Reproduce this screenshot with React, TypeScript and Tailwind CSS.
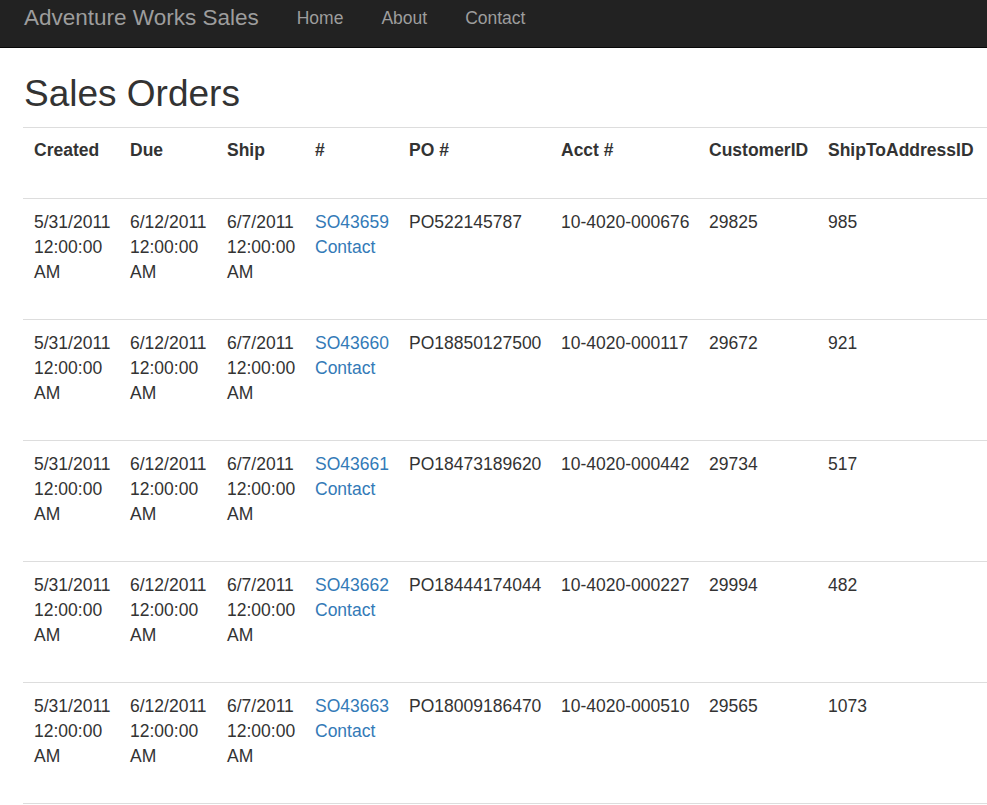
const NAV = ['Home', 'About', 'Contact'];

const COLS = [
  { label: 'Created', w: 'w-[96px]' },
  { label: 'Due', w: 'w-[97px]' },
  { label: 'Ship', w: 'w-[88px]' },
  { label: '#', w: 'w-[94px]' },
  { label: 'PO #', w: 'w-[152px]' },
  { label: 'Acct #', w: 'w-[148px]' },
  { label: 'CustomerID', w: 'w-[119px]' },
  { label: 'ShipToAddressID', w: 'w-[170px]' },
];

const ORDERS = [
  { so: 'SO43659', po: 'PO522145787', acct: '10-4020-000676', cust: '29825', addr: '985' },
  { so: 'SO43660', po: 'PO18850127500', acct: '10-4020-000117', cust: '29672', addr: '921' },
  { so: 'SO43661', po: 'PO18473189620', acct: '10-4020-000442', cust: '29734', addr: '517' },
  { so: 'SO43662', po: 'PO18444174044', acct: '10-4020-000227', cust: '29994', addr: '482' },
  { so: 'SO43663', po: 'PO18009186470', acct: '10-4020-000510', cust: '29565', addr: '1073' },
];

function DateCell({ date }: { date: string }) {
  return (
    <td className="pl-[11px] pt-[11px] pb-[34px] align-top">
      <span className="block">{date}</span>
      <span className="block">12:00:00</span>
      <span className="block">AM</span>
    </td>
  );
}

export default function App() {
  return (
    <div className="min-h-screen bg-white text-[17.5px] leading-[25px] text-[#333] font-['Liberation_Sans',Arial,sans-serif]">
      {/* navbar */}
      <nav className="flex h-[48px] items-center border-b border-[#080808] bg-[#222] pl-[24px]">
        <a href="#" className="mr-[19px] -mt-[11px] text-[22.5px] leading-[30px] text-[#9d9d9d]">
          Adventure Works Sales
        </a>
        <ul className="flex">
          {NAV.map((item) => (
            <li key={item}>
              <a href="#" className="-mt-[11px] block px-[19px] text-[17.5px] leading-[25px] text-[#9d9d9d]">
                {item}
              </a>
            </li>
          ))}
        </ul>
      </nav>

      <div className="overflow-hidden pl-[23px]">
        <h1 className="mt-[25px] mb-[13px] pl-px text-[37px] leading-[41px] font-normal text-[#333]">Sales Orders</h1>

        <table className="w-[964px] table-fixed border-collapse border-b border-[#ddd]">
          <colgroup>
            {COLS.map((c) => (
              <col key={c.label} className={c.w} />
            ))}
          </colgroup>
          <thead>
            <tr className="border-t border-[#ddd]">
              {COLS.map((c) => (
                <th key={c.label} className="pl-[11px] pt-[10px] pb-[35px] text-left align-top font-bold whitespace-nowrap">
                  {c.label}
                </th>
              ))}
            </tr>
          </thead>
          <tbody>
            {ORDERS.map((o) => (
              <tr key={o.so} className="border-t border-[#ddd]">
                <DateCell date="5/31/2011" />
                <DateCell date="6/12/2011" />
                <DateCell date="6/7/2011" />
                <td className="pl-[11px] pt-[11px] pb-[34px] align-top">
                  <a href="#" className="block text-[#337ab7]">{o.so}</a>
                  <a href="#" className="block text-[#337ab7]">Contact</a>
                </td>
                <td className="pl-[11px] pt-[11px] pb-[34px] align-top">{o.po}</td>
                <td className="pl-[11px] pt-[11px] pb-[34px] align-top">{o.acct}</td>
                <td className="pl-[11px] pt-[11px] pb-[34px] align-top">{o.cust}</td>
                <td className="pl-[11px] pt-[11px] pb-[34px] align-top">{o.addr}</td>
              </tr>
            ))}
          </tbody>
        </table>
      </div>
    </div>
  );
}
